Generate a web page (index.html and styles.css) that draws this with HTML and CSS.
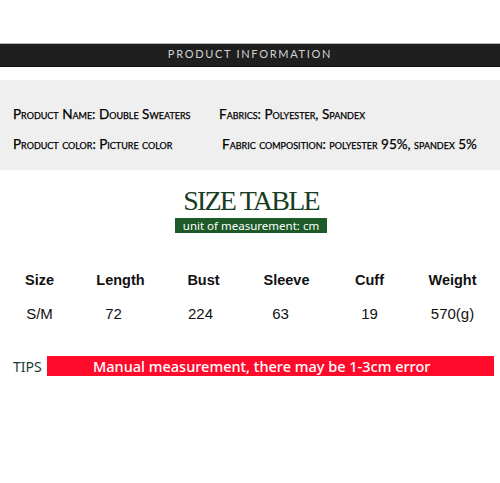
FILE: index.html
```html
<!DOCTYPE html>
<html>
<head>
<meta charset="utf-8">
<link rel="stylesheet" href="styles.css">
</head>
<body>
<div class="page">
  <div class="banner">PRODUCT INFORMATION</div>
  <div class="info">
    <div class="info-row">
      <span class="cell">Product Name: Double Sweaters</span>
      <span class="cell">Fabrics: Polyester, Spandex</span>
    </div>
    <div class="info-row">
      <span class="cell">Product color: Picture color</span>
      <span class="cell shift">Fabric composition: polyester 95%, spandex 5%</span>
    </div>
  </div>
  <div class="size-head">
    <div class="size-title">SIZE TABLE</div>
    <div class="unit">unit of measurement: cm</div>
  </div>
  <div class="table">
    <div class="th">Size</div>
    <div class="th">Length</div>
    <div class="th">Bust</div>
    <div class="th">Sleeve</div>
    <div class="th">Cuff</div>
    <div class="th">Weight</div>
    <div class="td">S/M</div>
    <div class="td l1">72</div>
    <div class="td l2">224</div>
    <div class="td l3">63</div>
    <div class="td">19</div>
    <div class="td">570(g)</div>
  </div>
  <div class="tips">
    <span class="tips-label">TIPS</span>
    <span class="tips-bar">Manual measurement, there may be 1-3cm error</span>
  </div>
</div>
</body>
</html>
```
FILE: styles.css
```css
html, body {
  margin: 0;
  padding: 0;
  background: #ffffff;
}
.page {
  width: 500px;
  padding-top: 43px;
}
.banner {
  border-top: 1px solid #b5b5b5;
  border-bottom: 1px solid #0c0c0c;
  background: #1f1f1f;
  box-sizing: content-box;
  line-height: 20px;
  padding-bottom: 2px;
  height: 20px;
  text-align: center;
  color: #d2d2d2;
  font-family: Lato, "Liberation Sans", sans-serif;
  font-size: 11px;
  letter-spacing: 1.7px;
}
.info {
  margin-top: 13px;
  background: #efefef;
  height: 90px;
  box-sizing: border-box;
  padding-top: 26px;
  font-family: Lato, "Liberation Sans", sans-serif;
  font-variant: small-caps;
  font-size: 13.5px;
  color: #000;
  -webkit-text-stroke: 0.25px #000;
}
.info-row {
  display: grid;
  grid-template-columns: 206px 1fr;
  padding-left: 13px;
  height: 30px;
}
.shift {
  padding-left: 3px;
}
.size-head {
  display: flex;
  flex-direction: column;
  align-items: center;
  padding-top: 17px;
}
.size-title {
  font-family: "Liberation Serif", serif;
  font-size: 28px;
  line-height: 28px;
  letter-spacing: -1.8px;
  color: #173d1f;
  padding-left: 2px;
}
.unit {
  margin-top: 3px;
  background: #1d5a27;
  color: #ffffff;
  width: 152px;
  height: 15px;
  line-height: 15px;
  text-align: center;
  font-family: "Noto Sans", sans-serif;
  font-size: 11.5px;
  margin-left: 2px;
}
.table {
  display: grid;
  grid-template-columns: 79px repeat(5, 83px);
  justify-items: center;
  margin-top: 35px;
  row-gap: 10px;
  font-family: "Liberation Sans", Arial, sans-serif;
  color: #111;
}
.th {
  font-weight: bold;
  font-size: 14.5px;
  line-height: 24px;
}
.td {
  font-size: 15px;
  line-height: 24px;
}
.l1 { margin-right: 14px; }
.l2 { margin-right: 6px; }
.l3 { margin-right: 12px; }
.tips {
  display: flex;
  align-items: center;
  margin-top: 30px;
  padding-left: 13px;
}
.tips-label {
  font-family: "Noto Sans", sans-serif;
  font-size: 14px;
  color: #1d3b38;
  width: 34px;
}
.tips-bar {
  width: 447px;
  height: 20px;
  line-height: 20px;
  background: #ff0a2b;
  color: #ffffff;
  font-family: "Noto Sans", sans-serif;
  font-weight: 500;
  font-size: 14.5px;
  letter-spacing: 0;
  box-sizing: border-box;
  padding-left: 46px;
  white-space: nowrap;
}
```
